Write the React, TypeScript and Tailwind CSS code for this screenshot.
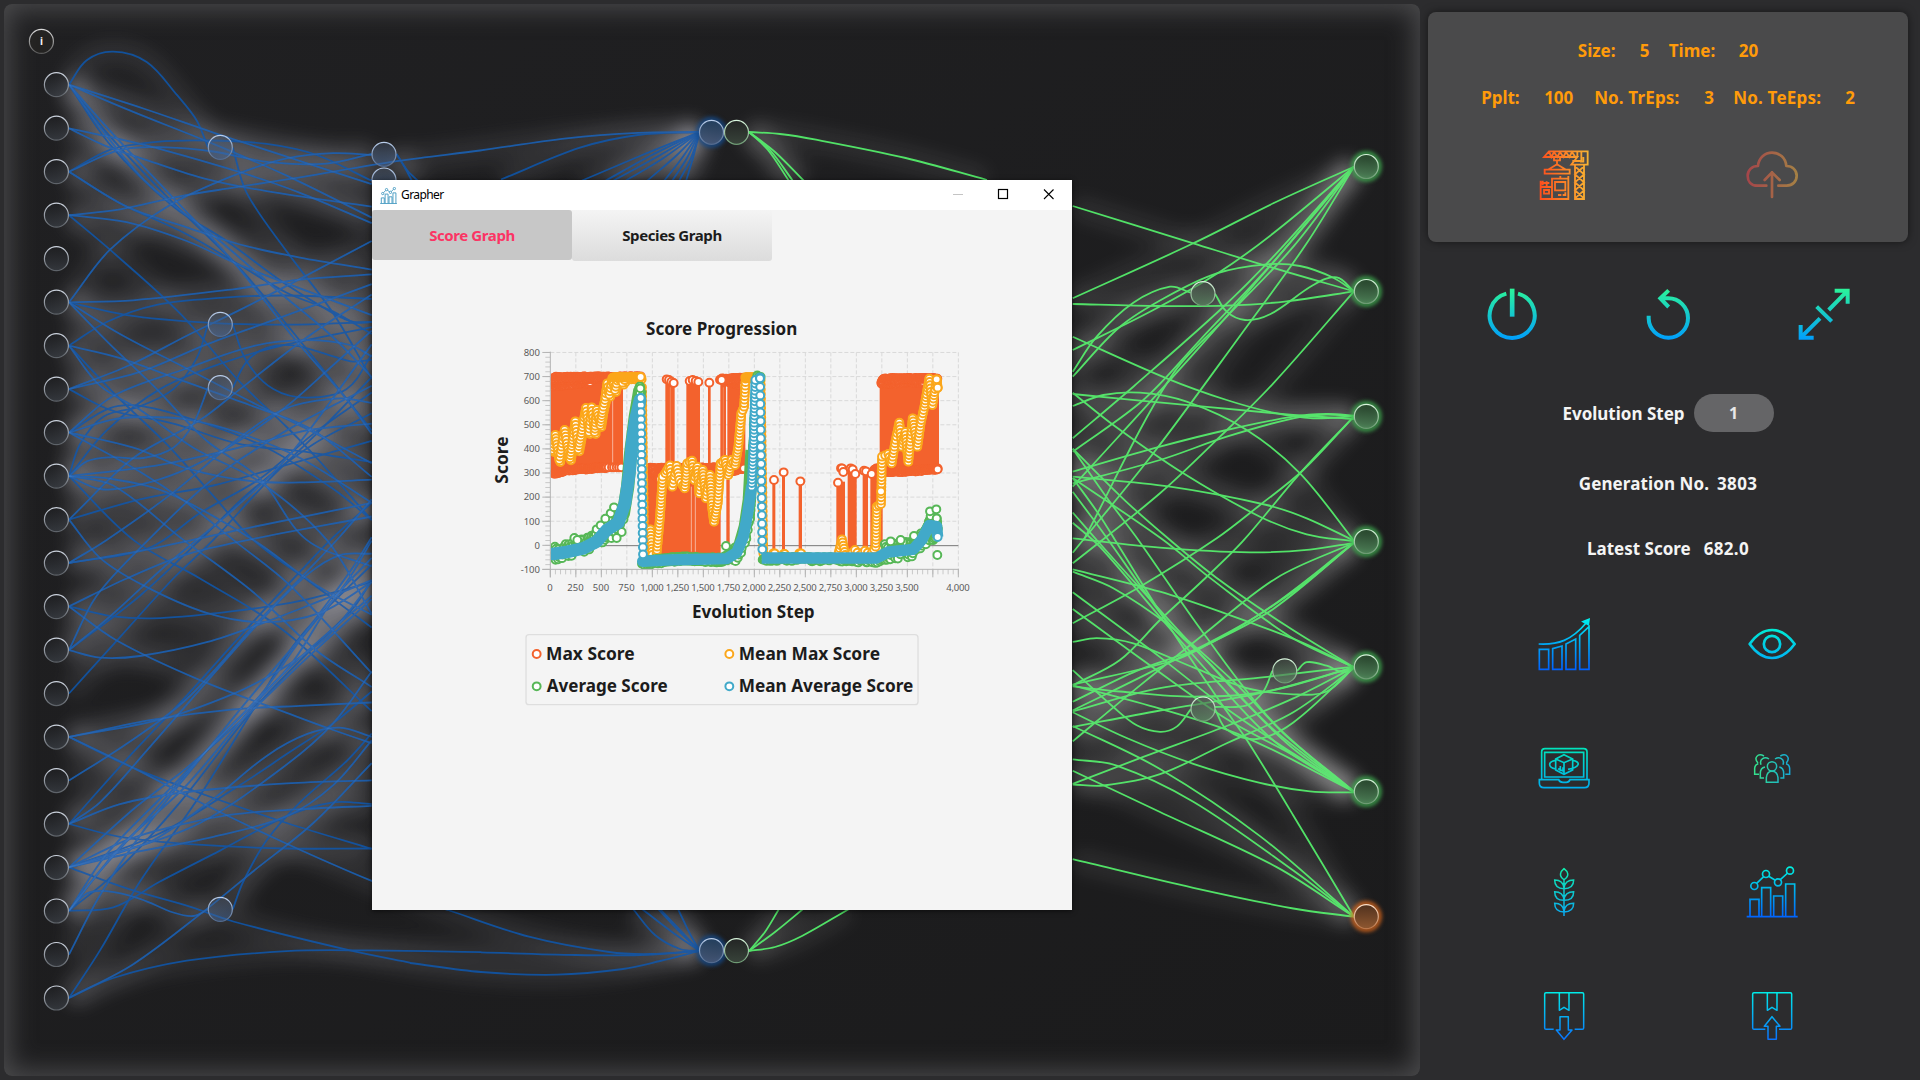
import React from "react";

type Pt = [number, number];
type Space = { ox: number; oy: number; sx: number; sy: number };

/* Smooth curve through a flat list of coordinates, mapped from a local space to canvas pixels. */
function curve(flat: number[], s: Space): string {
  const p: Pt[] = [];
  for (let i = 0; i < flat.length; i += 2) p.push([s.ox + flat[i] / s.sx, s.oy + flat[i + 1] / s.sy]);
  let d = `M${p[0][0].toFixed(1)} ${p[0][1].toFixed(1)}`;
  for (let i = 0; i < p.length - 1; i++) {
    const a = p[Math.max(0, i - 1)];
    const b = p[i];
    const c = p[i + 1];
    const e = p[Math.min(p.length - 1, i + 2)];
    const l = Math.hypot(c[0] - b[0], c[1] - b[1]);
    const l1 = Math.hypot(c[0] - a[0], c[1] - a[1]) || 1;
    const l2 = Math.hypot(e[0] - b[0], e[1] - b[1]) || 1;
    const k = l / 3;
    const x1 = b[0] + ((c[0] - a[0]) / l1) * k;
    const y1 = b[1] + ((c[1] - a[1]) / l1) * k;
    const x2 = c[0] - ((e[0] - b[0]) / l2) * k;
    const y2 = c[1] - ((e[1] - b[1]) / l2) * k;
    d += `C${x1.toFixed(1)} ${y1.toFixed(1)} ${x2.toFixed(1)} ${y2.toFixed(1)} ${c[0].toFixed(1)} ${c[1].toFixed(1)}`;
  }
  return d;
}

const LEFT: Space = { ox: 0, oy: 0, sx: 3, sy: 2.904 };
const MID: Space = { ox: 0, oy: 0, sx: 1, sy: 1 };
const RIGHT_TOP: Space = { ox: 1060, oy: 100, sx: 3, sy: 3 };
const RIGHT_BOTTOM: Space = { ox: 1060, oy: 540, sx: 3, sy: 2.904 };

const leftEdges: number[][] = [
  [207, 246, 260, 175, 340, 150, 440, 180, 530, 275, 590, 350, 624, 428],
  [207, 246, 430, 315, 640, 385, 860, 455, 1115, 535],
  [207, 246, 400, 325, 620, 410, 860, 510, 1115, 632],
  [207, 246, 330, 420, 520, 600, 680, 700, 850, 820, 1000, 910, 1060, 935, 1115, 935],
  [207, 246, 300, 370, 440, 530, 660, 700, 840, 850, 1000, 980, 1115, 1095],
  [207, 246, 340, 390, 520, 575, 700, 760, 880, 980, 1040, 1160, 1115, 1260],
  [207, 246, 320, 385, 500, 570, 720, 780, 850, 930, 1000, 1110, 1115, 1250],
  [207, 373, 340, 400, 470, 430, 720, 500, 900, 560, 1115, 648],
  [207, 373, 320, 425, 440, 465, 620, 520, 800, 555, 1115, 600],
  [207, 499, 330, 435, 470, 412, 620, 408, 800, 418, 950, 450, 1115, 525],
  [207, 499, 360, 435, 500, 428, 640, 440, 800, 470, 980, 475, 1115, 447],
  [207, 499, 380, 600, 560, 660, 720, 710, 900, 748, 1115, 783],
  [207, 499, 360, 590, 560, 680, 720, 770, 860, 850, 1000, 905, 1115, 970],
  [207, 625, 360, 608, 540, 570, 700, 545, 900, 515, 1190, 468, 1440, 437, 1700, 402, 1914, 386, 2098, 383],
  [207, 625, 380, 645, 560, 700, 720, 770, 880, 830, 1115, 915],
  [207, 625, 330, 725, 540, 910, 720, 1110, 860, 1240, 950, 1330, 1115, 1510],
  [207, 878, 330, 725, 510, 595, 700, 510, 860, 460, 1000, 445, 1115, 450],
  [207, 878, 400, 872, 700, 840, 900, 812, 1115, 797],
  [207, 878, 380, 915, 620, 937, 860, 943, 1115, 935],
  [207, 878, 360, 970, 560, 1070, 760, 1170, 940, 1255, 1115, 1345],
  [207, 878, 330, 1000, 460, 1120, 620, 1280, 780, 1390, 920, 1568, 1115, 1645],
  [207, 1004, 320, 935, 470, 885, 660, 865, 860, 858, 1115, 868],
  [207, 1004, 360, 1040, 560, 1110, 760, 1180, 940, 1250, 1115, 1385],
  [207, 1004, 300, 1120, 420, 1190, 580, 1300, 780, 1400, 980, 1568, 1115, 1782],
  [207, 1004, 350, 1150, 500, 1290, 640, 1440, 760, 1568, 930, 1690, 1115, 1822],
  [207, 1130, 390, 1060, 560, 975, 720, 900, 900, 810, 1115, 700],
  [207, 1130, 420, 1080, 620, 1000, 820, 930, 1115, 825],
  [207, 1130, 330, 1190, 520, 1230, 720, 1290, 900, 1310, 1115, 1342],
  [207, 1256, 340, 1150, 560, 1070, 760, 1005, 920, 988, 1050, 1002, 1115, 1035],
  [207, 1256, 330, 1220, 420, 1211, 560, 1218, 720, 1258, 900, 1330, 1115, 1460],
  [207, 1256, 330, 1185, 430, 1180, 600, 1225, 800, 1300, 1000, 1420, 1115, 1510],
  [207, 1256, 400, 1300, 560, 1360, 760, 1398, 940, 1400, 1115, 1393],
  [207, 1256, 420, 1370, 560, 1460, 700, 1568, 870, 1700, 1115, 1955],
  [207, 1383, 240, 1290, 310, 1210, 420, 1180, 520, 1130, 590, 1040, 624, 942],
  [207, 1383, 260, 1340, 330, 1328, 430, 1330, 520, 1300, 580, 1230, 624, 1126],
  [207, 1383, 300, 1420, 400, 1412, 540, 1370, 700, 1290, 860, 1180, 1000, 1060, 1115, 960],
  [207, 1383, 320, 1250, 480, 1130, 680, 1050, 860, 1000, 1115, 950],
  [207, 1383, 480, 1350, 760, 1290, 920, 1250, 1115, 1230],
  [207, 1383, 330, 1390, 500, 1430, 760, 1568, 950, 1700, 1115, 1785],
  [207, 1383, 400, 1568, 600, 1680, 850, 1830, 1115, 2065],
  [207, 1383, 340, 1410, 550, 1568, 760, 1720, 950, 1890, 1115, 1995],
  [207, 1509, 400, 1330, 600, 1220, 720, 1130, 920, 980, 1115, 855],
  [207, 1509, 420, 1450, 640, 1410, 860, 1350, 1115, 1280],
  [207, 1509, 300, 1620, 430, 1700, 620, 1780, 790, 1807, 960, 1780, 1115, 1690],
  [207, 1635, 320, 1568, 520, 1430, 720, 1270, 860, 1185, 1020, 1157, 1115, 1170],
  [207, 1635, 450, 1590, 600, 1490, 780, 1390, 940, 1260, 1115, 1140],
  [207, 1635, 420, 1600, 760, 1530, 1115, 1460],
  [207, 1761, 380, 1680, 560, 1610, 760, 1565, 1115, 1500],
  [207, 1761, 340, 1790, 480, 1795, 700, 1775, 900, 1745, 1115, 1690],
  [207, 1761, 350, 1860, 600, 1975, 860, 2070, 1000, 2120, 1115, 2158],
  [207, 1888, 290, 1730, 445, 1568, 640, 1390, 860, 1250, 1115, 1120],
  [207, 1888, 420, 1730, 600, 1568, 760, 1420, 940, 1290, 1115, 1200],
  [207, 1888, 330, 1790, 500, 1640, 700, 1480, 870, 1320, 1115, 1000],
  [207, 1888, 300, 1910, 420, 1905, 620, 1865, 800, 1805, 960, 1745, 1115, 1685],
  [207, 2014, 360, 1850, 520, 1680, 640, 1568, 800, 1400, 960, 1250, 1115, 1095],
  [207, 2140, 460, 2090, 700, 2060, 900, 2050, 1115, 2040],
  [207, 2140, 480, 2090, 700, 2015, 840, 1945, 980, 1850, 1115, 1690],
  [207, 2140, 400, 2230, 620, 2310, 860, 2390, 1115, 2465],
  [207, 2140, 400, 2230, 600, 2330, 860, 2450, 1115, 2558, 1344, 2643],
  [207, 2267, 380, 2160, 560, 2030, 760, 1820, 920, 1660, 1020, 1558, 1115, 1450],
  [207, 2393, 380, 2205, 560, 2020, 760, 1805, 900, 1660, 1000, 1560, 1115, 1460],
  [207, 2393, 300, 2330, 440, 2180, 620, 1980, 780, 1805, 920, 1670, 1020, 1612, 1115, 1608],
  [207, 2393, 360, 2335, 560, 2300, 860, 2275, 1115, 2266],
  [207, 2393, 360, 2430, 580, 2452, 860, 2464, 1115, 2464],
  [207, 2519, 380, 2440, 520, 2400, 700, 2365, 900, 2350, 1115, 2340],
  [207, 2519, 330, 2480, 460, 2440, 640, 2320, 800, 2195, 920, 2132, 1020, 2113, 1115, 2140],
  [207, 2519, 480, 2420, 720, 2280, 860, 2190, 1000, 2100, 1115, 2008],
  [207, 2519, 360, 2475, 600, 2390, 860, 2220, 1000, 2100, 1115, 1950],
  [207, 2519, 380, 2480, 640, 2430, 860, 2370, 1000, 2280, 1115, 2150],
  [207, 2519, 380, 2580, 560, 2630, 700, 2676, 1050, 2760, 1232, 2796],
  [207, 2519, 400, 2350, 560, 2230, 760, 2060, 900, 1930, 1115, 1740],
  [207, 2645, 260, 2595, 320, 2588, 420, 2610, 520, 2650, 580, 2660, 624, 2641],
  [207, 2645, 340, 2635, 480, 2560, 660, 2470, 860, 2370, 1000, 2330, 1115, 2335],
  [207, 2645, 360, 2460, 560, 2280, 760, 2050, 880, 1920, 1000, 1740, 1115, 1620],
  [207, 2645, 320, 2480, 500, 2300, 640, 2160, 900, 1910, 1115, 1730],
  [207, 2645, 340, 2540, 540, 2330, 760, 2060, 940, 1880, 1060, 1765, 1115, 1685],
  [207, 2645, 300, 2530, 440, 2380, 620, 2180, 780, 2020, 900, 1860, 1040, 1690, 1115, 1570],
  [207, 2772, 300, 2600, 440, 2400, 620, 2180, 780, 1990, 920, 1830, 1050, 1660, 1115, 1560],
  [207, 2898, 300, 2760, 420, 2560, 600, 2310, 760, 2060, 900, 1850, 1115, 1640],
  [207, 2898, 400, 2800, 620, 2640, 760, 2530, 940, 2390, 1115, 2216],
  [207, 2898, 340, 2840, 560, 2790, 860, 2762, 1100, 2760, 1444, 2765],
  [698, 428, 740, 560, 860, 730, 1000, 910, 1115, 1100],
  [698, 942, 740, 1050, 820, 1130, 920, 1155, 1040, 1130, 1115, 1030],
  [698, 1126, 740, 1050, 800, 1010, 880, 1003, 1000, 1035, 1060, 1050, 1115, 1045],
  [698, 2641, 730, 2560, 800, 2440, 900, 2330, 1040, 2210, 1115, 2130],
];

const midBlueEdges: number[][] = [
  [501, 179.5, 580, 147.7, 638, 135, 699.5, 132],
  [581, 181, 640, 156, 699.5, 132],
  [605, 181, 650, 156, 699.5, 132],
  [613, 181, 655, 158, 699.5, 132],
  [625, 181, 662, 159, 699.5, 132],
  [647, 181, 677, 155, 699.5, 132],
  [664, 181, 682, 158, 699.5, 132],
  [672, 181, 687, 158, 699.5, 132],
  [679, 181, 691, 158, 699.5, 132],
  [686, 181, 693, 158, 699.5, 132],
  [396.5, 154, 404, 166, 412, 181],
  [396.5, 154, 407, 170, 418, 181],
  [448, 910, 529, 936.7, 609, 952, 650, 954, 699.5, 951],
  [481, 952.3, 576, 955, 640, 955, 699.5, 951],
  [410, 963, 481, 972, 557, 974.7, 623, 969, 660, 961, 699.5, 951],
  [633, 909, 655, 935, 680, 949, 699.5, 951],
  [642, 909, 672, 932, 699.5, 951],
  [658, 909, 678, 930, 699.5, 951],
  [660, 909, 682, 932, 699.5, 951],
  [678, 909, 689, 932, 699.5, 951],
];

const midGreenEdges: number[][] = [
  [749, 132, 780, 134, 816, 139.7, 905.7, 158, 987, 180],
  [749, 132, 768, 150, 789, 181],
  [749, 132, 770, 150, 793, 181],
  [749, 132, 775, 152, 804, 181],
  [749, 951, 765, 932, 779, 909],
  [749, 951, 775, 932, 803, 909],
  [749, 951, 775, 947, 802, 936, 849, 909],
];

const rightTopEdges: number[][] = [
  [38, 595, 400, 430, 640, 310, 882, 200],
  [38, 318, 400, 430, 620, 498, 882, 574],
  [38, 612, 300, 618, 500, 617, 680, 604, 882, 574],
  [38, 750, 280, 630, 480, 515, 640, 400, 882, 200],
  [38, 815, 110, 710, 220, 608, 330, 560, 392, 578],
  [465, 581, 500, 635, 555, 660, 630, 643, 760, 555, 830, 532, 882, 574],
  [38, 830, 180, 680, 320, 590, 470, 520, 620, 493, 720, 498, 820, 533, 882, 574],
  [38, 1015, 220, 860, 480, 630, 640, 470, 882, 200],
  [38, 1055, 250, 900, 420, 720, 650, 475, 882, 200],
  [38, 1160, 180, 1005, 420, 740, 620, 510, 882, 200],
  [70, 1322, 330, 835, 500, 650, 700, 440, 882, 200],
  [38, 1358, 280, 1060, 560, 680, 740, 430, 882, 200],
  [38, 710, 320, 835, 500, 900, 640, 938, 760, 955, 882, 949],
  [38, 882, 400, 917, 700, 945, 882, 957],
  [38, 1115, 300, 1040, 500, 990, 700, 950, 800, 942, 882, 947],
  [38, 1150, 300, 1080, 500, 1010, 700, 955, 800, 944, 882, 949],
  [38, 918, 130, 885, 240, 878, 380, 905, 560, 990, 720, 1120, 882, 1322],
  [38, 878, 160, 975, 370, 1120, 600, 1250, 740, 1303, 882, 1324],
  [38, 1130, 330, 1160, 620, 1215, 740, 1255, 882, 1322],
  [882, 574, 640, 850, 480, 1010, 300, 1180, 38, 1390],
  [882, 949, 730, 1110, 600, 1215, 470, 1315, 240, 1460, 38, 1570],
  [882, 949, 720, 1120, 550, 1322, 430, 1440, 300, 1560, 180, 1680, 38, 1756],
];

const rightBottomEdges: number[][] = [
  [38, -265, 150, -110, 235, 0, 430, 270, 640, 530, 882, 731],
  [38, -140, 100, -60, 145, 0, 320, 235, 440, 350, 640, 550, 882, 731],
  [38, -80, 110, 0, 240, 140, 410, 320, 680, 590, 882, 731],
  [38, -50, 120, 20, 310, 235, 460, 400, 650, 590, 882, 731],
  [38, -180, 120, -70, 165, 0, 320, 240, 480, 470, 560, 580, 700, 800, 882, 1094],
  [38, -265, 200, -110, 330, 0, 470, 110, 680, 250, 882, 370],
  [38, -180, 310, 0, 450, 110, 690, 280, 882, 370],
  [38, -5, 300, 22, 570, 36, 750, 28, 882, 8],
  [38, 85, 300, 150, 500, 215, 720, 295, 882, 370],
  [38, 92, 160, 140, 330, 250, 520, 410, 680, 570, 882, 731],
  [38, 152, 300, 340, 500, 490, 700, 620, 882, 731],
  [38, 200, 250, 350, 500, 520, 700, 625, 882, 731],
  [38, 296, 110, 285, 220, 300, 400, 370, 560, 430, 700, 448, 800, 440, 882, 370],
  [38, 378, 160, 485, 230, 538, 300, 557, 350, 542, 392, 492],
  [465, 491, 500, 550, 590, 578, 700, 530, 882, 370],
  [465, 485, 560, 480, 610, 440, 637, 380],
  [711, 380, 740, 355, 800, 365, 850, 384, 882, 370],
  [38, 470, 230, 380, 450, 300, 700, 150, 882, 8],
  [38, 495, 300, 370, 600, 215, 882, 8],
  [38, 585, 230, 430, 430, 275, 650, 110, 882, 8],
  [38, 425, 180, 440, 400, 455, 620, 440, 882, 370],
  [38, 498, 300, 430, 600, 400, 882, 368],
  [38, 543, 300, 495, 600, 445, 882, 370],
  [38, 708, 250, 630, 500, 540, 700, 460, 882, 370],
  [38, 710, 130, 713, 300, 680, 500, 590, 700, 500, 882, 372],
  [38, 420, 340, 350, 450, 300, 640, 200, 882, 8],
  [38, 500, 200, 575, 400, 650, 600, 705, 750, 730, 882, 733],
  [38, 422, 300, 490, 550, 570, 882, 731],
  [38, 637, 170, 655, 400, 760, 700, 960, 882, 1094],
  [38, 540, 300, 665, 600, 860, 882, 1094],
  [38, 670, 300, 790, 650, 950, 882, 1094],
  [38, 927, 400, 1010, 700, 1070, 882, 1094],
];

const bluePaths = [...leftEdges.map((e) => curve(e, LEFT)), ...midBlueEdges.map((e) => curve(e, MID))];
const greenPaths = [
  ...midGreenEdges.map((e) => curve(e, MID)),
  ...rightTopEdges.map((e) => curve(e, RIGHT_TOP)),
  ...rightBottomEdges.map((e) => curve(e, RIGHT_BOTTOM)),
];

const inputNodes: Pt[] = Array.from({ length: 22 }, (_, i) => [56.4, 84.7 + 43.49 * i]);
const blueHidden: Pt[] = [
  [220.3, 147.4],
  [220.3, 324.4],
  [220.3, 387.7],
  [220.3, 909.4],
  [384, 180],
  [384, 154.3],
];
const greenHidden: Pt[] = [
  [1203, 293.7],
  [1203, 709],
  [1284.7, 670.9],
];
const outputNodes: Pt[] = [
  [1366.3, 166.5],
  [1366.3, 291.5],
  [1366.3, 416.4],
  [1366.3, 541.5],
  [1366.3, 666.8],
  [1366.3, 791.6],
];

function Node({ at, fill, ring, glow }: { at: Pt; fill: string; ring: string; glow?: string }) {
  return (
    <g>
      {glow && <circle cx={at[0]} cy={at[1]} r="13" fill="none" stroke={glow} strokeWidth="4" filter="url(#nodeGlow)" />}
      <circle cx={at[0]} cy={at[1]} r="12" fill={fill} stroke={ring} strokeWidth="1.2" />
    </g>
  );
}

function Stops({ id, stops }: { id: string; stops: [string, number][] }) {
  return (
    <linearGradient id={id} x1="0" y1="0" x2="0" y2="1">
      {stops.map(([c, o], i) => (
        <stop key={i} offset={i / (stops.length - 1)} stopColor={c} stopOpacity={o} />
      ))}
    </linearGradient>
  );
}

function Network() {
  const all = [...bluePaths, ...greenPaths];
  return (
    <svg className="block h-full w-full" viewBox="4 4 1416 1072">
      <defs>
        <filter id="haze" filterUnits="userSpaceOnUse" x="0" y="0" width="1420" height="1080" colorInterpolationFilters="sRGB">
          <feGaussianBlur stdDeviation="9.5" />
        </filter>
        <filter id="nodeGlow" x="-50%" y="-50%" width="200%" height="200%" colorInterpolationFilters="sRGB">
          <feGaussianBlur stdDeviation="2.2" />
        </filter>
        <Stops id="ringBlue" stops={[["#ccd3de", 1], ["#5d6268", 1]]} />
        <Stops id="fillIn" stops={[["#1e1f22", 0.55], ["#3c4148", 0.7]]} />
        <Stops id="ringHid" stops={[["#b9cdea", 1], ["#51698d", 1]]} />
        <Stops id="fillHid" stops={[["#4a5d78", 0.3], ["#456ba2", 0.5]]} />
        <Stops id="fillHidDark" stops={[["#23405f", 0.9], ["#47597a", 0.9]]} />
        <Stops id="ringGreen" stops={[["#d8f5dc", 1], ["#6d9a73", 1]]} />
        <Stops id="fillGreen" stops={[["#27452c", 0.9], ["#50865a", 0.9]]} />
        <Stops id="fillGreenHid" stops={[["#4c594e", 0.5], ["#5d8a64", 0.75]]} />
        <Stops id="fillGreyGreen" stops={[["#232524", 1], ["#38433a", 1]]} />
        <Stops id="ringOrange" stops={[["#ffe0c8", 1], ["#b9764a", 1]]} />
        <Stops id="fillOrange" stops={[["#50311e", 1], ["#8e5730", 1]]} />
        <Stops id="ringGrey" stops={[["#e0e0e0", 1], ["#5a5a5a", 1]]} />
      </defs>
      <g fill="none" stroke="#ffffff" strokeWidth="24" strokeOpacity="0.064" filter="url(#haze)">
        {all.map((d, i) => (
          <path key={i} d={d} />
        ))}
      </g>
      <g fill="none" stroke="#0f4f9a" strokeWidth="1.8">
        {bluePaths.map((d, i) => (
          <path key={i} d={d} />
        ))}
      </g>
      <g fill="none" stroke="#c4dcff" strokeWidth="20" strokeOpacity="0.022" filter="url(#haze)">
        {bluePaths.map((d, i) => (
          <path key={i} d={d} />
        ))}
      </g>
      <g fill="none" stroke="#4fe265" strokeWidth="1.8">
        {greenPaths.map((d, i) => (
          <path key={i} d={d} />
        ))}
      </g>
      <g fill="none" stroke="#ffffff" strokeWidth="20" strokeOpacity="0.018" filter="url(#haze)">
        {greenPaths.map((d, i) => (
          <path key={i} d={d} />
        ))}
      </g>
      <g fill="none" stroke="#6ba2ec" strokeWidth="1.8" strokeOpacity="0.12">
        {bluePaths.slice(0, 80).map((d, i) => (i % 3 ? <path key={i} d={d} /> : null))}
      </g>
      {inputNodes.map((p, i) => (
        <Node key={i} at={p} fill="url(#fillIn)" ring="url(#ringBlue)" />
      ))}
      {blueHidden.map((p, i) => (
        <Node key={i} at={p} fill="url(#fillHid)" ring="url(#ringHid)" />
      ))}
      {greenHidden.map((p, i) => (
        <Node key={i} at={p} fill="url(#fillGreenHid)" ring="url(#ringGreen)" />
      ))}
      <Node at={[711.5, 132.3]} fill="url(#fillHidDark)" ring="url(#ringHid)" glow="#134a8c" />
      <Node at={[736.5, 132.3]} fill="url(#fillGreyGreen)" ring="url(#ringGreen)" />
      <Node at={[711.5, 950.6]} fill="url(#fillHidDark)" ring="url(#ringHid)" glow="#134a8c" />
      <Node at={[736.5, 950.6]} fill="url(#fillGreyGreen)" ring="url(#ringGreen)" />
      {outputNodes.map((p, i) => (
        <Node key={i} at={p} fill="url(#fillGreen)" ring="url(#ringGreen)" glow="#3fae50" />
      ))}
      <Node at={[1366.3, 916.6]} fill="url(#fillOrange)" ring="url(#ringOrange)" glow="#e06a1c" />
      <circle cx="41.4" cy="41.4" r="12" fill="#242322" stroke="url(#ringGrey)" strokeWidth="1.2" />
      <text x="41.4" y="45" textAnchor="middle" fill="#f2f2f2" fontSize="10" fontWeight="700" fontFamily="Noto Sans, sans-serif">
        i
      </text>
    </svg>
  );
}

/* ---------- Chart ---------- */

const RED = "#f3622d";
const ORANGE = "#fba71b";
const GREEN = "#57b757";
const CYAN = "#41a9c9";

function along(flat: number[], step: number): Pt[] {
  const out: Pt[] = [];
  for (let i = 0; i + 3 < flat.length; i += 2) {
    const [x1, y1, x2, y2] = [flat[i], flat[i + 1], flat[i + 2], flat[i + 3]];
    const n = Math.max(1, Math.round(Math.hypot(x2 - x1, y2 - y1) / step));
    for (let k = 0; k < n; k++) out.push([x1 + ((x2 - x1) * k) / n, y1 + ((y2 - y1) * k) / n]);
  }
  out.push([flat[flat.length - 2], flat[flat.length - 1]]);
  return out;
}

const noise = (n: number) => {
  const v = Math.sin(n * 127.1 + 11.7) * 43758.5453;
  return (v - Math.floor(v)) * 2 - 1;
};

function jitter(pts: Pt[], amp: number): Pt[] {
  return pts.map(([x, y], i) => [x, y + noise(i) * amp]);
}

function shift(flat: number[], dx: number, dy: number): number[] {
  return flat.map((v, i) => v + (i % 2 ? dy : dx));
}

function Dots({ pts, color }: { pts: Pt[]; color: string }) {
  return (
    <g fill="#ffffff" stroke={color} strokeWidth="6">
      {pts.map(([x, y], i) => (
        <circle key={i} cx={x.toFixed(1)} cy={y.toFixed(1)} r="11.8" />
      ))}
    </g>
  );
}

const redBlocks: [number, number, number, number][] = [
  [211, 230, 429, 515],
  [556, 240, 584, 520],
  [619, 240, 660, 520],
  [684, 246, 692, 520],
  [721, 240, 738, 520],
  [742, 230, 796, 510],
  [503, 500, 536, 760],
  [540, 500, 722, 770],
  [739, 540, 749, 760],
  [877, 540, 886, 760],
  [906, 516, 915, 760],
  [956, 545, 966, 760],
  [1069, 545, 1095, 760],
  [1103, 510, 1130, 760],
  [1148, 515, 1164, 760],
  [1171, 510, 1208, 740],
  [1199, 240, 1377, 515],
];
const redRows: number[][] = [
  [222, 256, 330, 248],
  [224, 238, 470, 234],
  [222, 232, 482, 231],
  [222, 520, 260, 510, 380, 502],
  [505, 505, 722, 504],
  [515, 510, 540, 540],
  [742, 515, 792, 504],
  [745, 245, 790, 256],
  [720, 238, 800, 234],
  [1205, 250, 1330, 245],
  [1204, 247, 1212, 236, 1372, 236],
  [1210, 514, 1280, 514, 1373, 507],
  [1183, 508, 1205, 505],
];
const redSingles: Pt[] = [
  [386, 502], [396, 502], [402, 502], [410, 502], [417, 502], [424, 502], [560, 238], [567, 240], [574, 245], [581, 249], [629, 243], [638, 240], [647, 243], [655, 246],
  [688, 248], [725, 240], [792, 505], [882, 540], [911, 517], [961, 544], [1074, 548], [1083, 505], [1086, 505], [1090, 516],
  [1112, 505], [1118, 508], [1126, 522], [1152, 512], [1158, 514], [1175, 522], [1373, 508],
];
const orangeMain = [
  219, 450, 226, 405, 238, 480, 248, 420, 254, 390, 262, 440, 270, 475, 278, 420, 286, 364, 295, 448, 304, 400, 318, 324, 327, 396, 335, 322, 344, 396,
  350, 330, 361, 375, 368, 330, 375, 300, 382, 250, 388, 284, 397, 234, 405, 270, 414, 232, 428, 248, 440, 232, 482, 232,
];
const orangeSecond = [
  505, 760, 511, 688, 517, 765, 530, 760, 540, 650, 548, 530, 556, 520, 570, 496, 577, 560, 590, 498, 598, 540, 614, 565, 622, 490, 636, 482,
  643, 540, 652, 500, 658, 580, 668, 510, 678, 595, 690, 525, 696, 620, 702, 665, 713, 610, 722, 490, 735, 480, 745, 525, 755, 480, 765, 495,
  775, 440, 784, 340, 792, 320, 797, 236, 835, 232,
];
const orangeThird = [
  1075, 762, 1086, 718, 1096, 765, 1110, 765, 1125, 750, 1140, 766, 1155, 752, 1172, 764, 1187, 740, 1190, 620, 1203, 612, 1206, 470, 1225, 462,
  1235, 490, 1245, 430, 1258, 368, 1266, 440, 1276, 396, 1285, 485, 1298, 355, 1312, 440, 1322, 370, 1333, 320, 1348, 236, 1357, 315,
  1370, 238, 1373, 263,
];
const greenRise = [219, 760, 290, 742, 350, 720, 400, 690, 430, 640, 443, 560, 452, 460, 466, 350, 480, 268];
const greenFlat = [486, 788, 600, 776, 730, 780, 780, 750, 800, 680, 812, 600, 820, 450, 826, 300, 832, 232, 842, 232];
const greenLast = [848, 776, 960, 776, 1195, 782, 1230, 752, 1300, 745, 1335, 700, 1350, 660, 1370, 660, 1373, 690];
const greenSingles: Pt[] = [
  [283, 714], [292, 720], [392, 640], [402, 622], [425, 696], [410, 714], [481, 265], [738, 738], [350, 688], [362, 676], [376, 656],
  [1352, 648], [1370, 655], [1350, 634], [1369, 628], [1372, 765], [1302, 708], [1232, 724], [1262, 720],
];
const cyanRise = [219, 762, 260, 756, 310, 745, 350, 725, 380, 690, 415, 668, 435, 610, 448, 520, 456, 430, 466, 360, 480, 300];
const cyanFall = [482, 294, 489, 763];
const cyanFlat = [488, 784, 560, 780, 740, 776, 770, 758, 790, 710, 803, 640, 815, 560];
const cyanTop = [815, 560, 822, 400, 826, 240, 840, 232];
const cyanFall2 = [840, 235, 847, 748];
const cyanLast = [845, 774, 1190, 774, 1225, 756, 1300, 748, 1325, 720, 1348, 676, 1370, 680, 1373, 711];

function ScoreChart() {
  const yTicks = [800, 700, 600, 500, 400, 300, 200, 100, 0, -100];
  const xLabels = [0, 250, 500, 750, 1000, 1250, 1500, 1750, 2000, 2250, 2500, 2750, 3000, 3250, 3500, 4000];
  const toX = (v: number) => 211 + v * 0.306;
  const toY = (v: number) => 736 - v * 0.7233;
  return (
    <svg className="block h-[420px] w-[520px]" viewBox="0 0 1560 1260" fontFamily="Noto Sans, Open Sans, sans-serif">
      <defs>
        <clipPath id="plot">
          <rect x="212" y="150" width="1224" height="657" />
        </clipPath>
      </defs>
      <g stroke="#d9d9d9" strokeWidth="3" strokeDasharray="12 6">
        {yTicks.filter((v) => v !== 0 && v !== -100).map((v) => (
          <line key={v} x1="211" x2="1435" y1={toY(v)} y2={toY(v)} />
        ))}
        {Array.from({ length: 16 }, (_, i) => (
          <line key={i} y1="157" y2="808" x1={toX(250 * (i + 1))} x2={toX(250 * (i + 1))} />
        ))}
      </g>
      <line x1="211" x2="1435" y1="737" y2="737" stroke="#777777" strokeWidth="3" />
      <g stroke="#c8c8c8" strokeWidth="3">
        {Array.from({ length: 81 }, (_, i) => (
          <line key={i} x1={toX(50 * i)} x2={toX(50 * i)} y1="808" y2="823" />
        ))}
        {Array.from({ length: 46 }, (_, i) => (
          <line key={i} x1="196" x2="211" y1={toY(-100 + 20 * i)} y2={toY(-100 + 20 * i)} />
        ))}
      </g>

      <g clipPath="url(#plot)">
        <g fill={RED}>
          {redBlocks.map(([x1, y1, x2, y2], i) => (
            <rect key={i} x={x1} y={y1} width={x2 - x1} height={y2 - y1} />
          ))}
        </g>
        <g stroke="#f9c3ae" strokeWidth="2.5">
          <line x1="398" x2="398" y1="290" y2="495" />
          <line x1="571" x2="571" y1="262" y2="490" stroke="#f58a60" />
          <line x1="634" x2="634" y1="560" y2="755" />
          <line x1="646" x2="646" y1="560" y2="755" />
          <line x1="730" x2="730" y1="262" y2="480" stroke="#f58a60" />
        </g>
        <Dots pts={[[218, 260], [238, 256], [258, 255]]} color={RED} />
        {redRows.map((r, i) => (
          <Dots key={i} pts={jitter(along(r, 2), 2.5)} color={RED} />
        ))}
        <Dots pts={redSingles} color={RED} />

        <g fill="none" stroke={ORANGE} strokeWidth="28" strokeLinejoin="round" strokeLinecap="round">
          <polyline points={orangeMain.join(" ")} />
          <polyline points={orangeSecond.join(" ")} />
          <polyline points={orangeThird.slice(24).join(" ")} />
        </g>
        <Dots pts={along(shift(orangeMain, 3, 6), 10)} color={ORANGE} />
        <Dots pts={along(orangeMain, 10)} color={ORANGE} />
        <Dots pts={along([400, 232, 482, 232], 2)} color={ORANGE} />
        <Dots pts={along([486, 262, 493, 760], 14)} color={ORANGE} />
        <Dots pts={along(orangeSecond, 10)} color={ORANGE} />
        <Dots pts={along([796, 232, 836, 232], 2)} color={ORANGE} />
        <Dots pts={along([842, 240, 850, 760], 14)} color={ORANGE} />
        <Dots pts={[[880, 760], [884, 760], [911, 762], [914, 762], [958, 760], [963, 760]]} color={ORANGE} />
        <Dots pts={along(orangeThird, 10)} color={ORANGE} />
        <Dots pts={[[1203, 574], [1370, 238], [1373, 263]]} color={ORANGE} />

        <g fill="none" stroke={GREEN} strokeWidth="40" strokeLinejoin="round">
          <polyline points={greenRise.join(" ")} />
          <polyline points={shift(greenFlat, -4, 0).slice(0, 14).join(" ")} />
        </g>
        <Dots pts={jitter(along(greenRise, 2), 22)} color={GREEN} />
        <Dots pts={jitter(along(greenFlat, 2), 8)} color={GREEN} />
        <Dots pts={jitter(along([760, 770, 790, 725, 808, 660, 815, 560, 822, 420], 3), 24)} color={GREEN} />
        <Dots pts={jitter(along(greenLast, 3), 7)} color={GREEN} />
        <Dots pts={jitter(along([1210, 755, 1300, 745, 1345, 700, 1372, 690], 1.5), 26)} color={GREEN} />
        <Dots pts={greenSingles} color={GREEN} />

        <g fill="none" stroke={CYAN} strokeWidth="34" strokeLinejoin="round">
          <polyline points={cyanRise.join(" ")} strokeLinecap="round" strokeWidth="38" />
          <polyline points={cyanFlat.join(" ")} strokeLinecap="round" />
          <polyline points={cyanLast.join(" ")} />
        </g>
        <Dots pts={along(cyanFall, 21.5)} color={CYAN} />
        <Dots pts={along(cyanTop, 11)} color={CYAN} />
        <Dots pts={along(cyanFall2, 26)} color={CYAN} />
        <Dots pts={[[482, 294], [840, 235], [1373, 711]]} color={CYAN} />
        <Dots pts={[[482, 231]]} color={ORANGE} />
      </g>

      <g stroke="#b4b4b4" strokeWidth="3">
        <line x1="211" x2="211" y1="155" y2="832" />
        <line x1="187" x2="1437" y1="808" y2="808" />
        {yTicks.map((v) => (
          <line key={v} x1="187" x2="211" y1={toY(v)} y2={toY(v)} />
        ))}
        {Array.from({ length: 17 }, (_, i) => (
          <line key={i} x1={toX(250 * i)} x2={toX(250 * i)} y1="808" y2="832" />
        ))}
      </g>
      <g fontSize="28.5" fill="#5a5a5a">
        {yTicks.map((v) => (
          <text key={v} x="180" y={toY(v) + 10} textAnchor="end">
            {v}
          </text>
        ))}
        {xLabels.map((v) => (
          <text key={v} x={toX(v) - 1} y="873" textAnchor="middle" textLength={v >= 1000 ? 70 : undefined}>
            {v.toLocaleString("en-US")}
          </text>
        ))}
      </g>
      <g fontWeight="700" fill="#1c1c1c" fontSize="52">
        <text x="498" y="105" textLength="454" lengthAdjust="spacingAndGlyphs">Score Progression</text>
        <text x="636" y="955" textLength="368" lengthAdjust="spacingAndGlyphs">Evolution Step</text>
        <text transform="translate(85 551) rotate(-90)" textLength="142" lengthAdjust="spacingAndGlyphs">Score</text>
      </g>
      <rect x="138" y="1004" width="1176" height="210" rx="9" fill="#f4f4f4" stroke="#dedede" strokeWidth="4" />
      <Dots pts={[[170, 1062]]} color={RED} />
      <Dots pts={[[748, 1062]]} color={ORANGE} />
      <Dots pts={[[170, 1159]]} color={GREEN} />
      <Dots pts={[[748, 1159]]} color={CYAN} />
      <g fontWeight="700" fill="#1c1c1c" fontSize="52">
        <text x="198" y="1080" textLength="266" lengthAdjust="spacingAndGlyphs">Max Score</text>
        <text x="776" y="1080" textLength="424" lengthAdjust="spacingAndGlyphs">Mean Max Score</text>
        <text x="200" y="1177" textLength="363" lengthAdjust="spacingAndGlyphs">Average Score</text>
        <text x="776" y="1177" textLength="524" lengthAdjust="spacingAndGlyphs">Mean Average Score</text>
      </g>
    </svg>
  );
}

function GrapherWindow() {
  return (
    <div className="absolute left-[368px] top-[176px] flex h-[730px] w-[700px] flex-col bg-[#f4f4f4] shadow-[0_1px_5px_rgba(0,0,0,0.6)]">
      <div className="flex h-[30px] items-center bg-white pl-2">
        <svg className="h-[17px] w-[17px]" viewBox="739 77 156 156">
          <BarsShape stroke="#4f9fc4" width={9} />
        </svg>
        <span className="ml-1 text-[12px] leading-none tracking-[-0.6px] text-black">Grapher</span>
        <div className="ml-auto flex items-center">
          <svg className="h-[30px] w-[138px]" viewBox="0 0 138 30" fill="none" strokeWidth="1">
            <path d="M19 14.5h10" stroke="#c4c4c4" />
            <rect x="64.5" y="9.5" width="9" height="9" stroke="#000000" strokeWidth="1.2" />
            <path d="M110 9.500l9.500 9.500M119.500 9.500l-9.500 9.500" stroke="#000000" strokeWidth="1.1" />
          </svg>
        </div>
      </div>
      <div className="flex text-[15px] font-bold tracking-[-0.4px]">
        <div className="flex h-[50px] w-[200px] items-center justify-center rounded-[3px] bg-[#c7c7c7] text-[#fb3464]">Score Graph</div>
        <div className="flex h-[51px] w-[200px] items-center justify-center rounded-b-[3px] bg-gradient-to-b from-[#f4f4f4] to-[#dcdcdc] text-[#1c1c1c]">
          Species Graph
        </div>
      </div>
      <div className="ml-[108px] mt-[39px]">
        <ScoreChart />
      </div>
    </div>
  );
}

/* ---------- Side bar icons ---------- */

function Icon({ box, id, from, to, dir = "v", width = 5, opacity = 1, children }: {
  box: [number, number]; id: string; from: string; to: string; dir?: "v" | "h"; width?: number; opacity?: number; children: React.ReactNode;
}) {
  const [x, y] = box;
  return (
    <svg className="h-[52px] w-[52px] overflow-visible" viewBox={`${x} ${y} 156 156`} fill="none" stroke={`url(#${id})`} strokeWidth={width} opacity={opacity}>
      <defs>
        <linearGradient id={id} gradientUnits="userSpaceOnUse" x1={x} y1={y} x2={dir === "h" ? x + 156 : x} y2={dir === "v" ? y + 156 : y}>
          <stop offset="0" stopColor={from} />
          <stop offset="1" stopColor={to} />
        </linearGradient>
      </defs>
      {children}
    </svg>
  );
}

function BarsShape({ stroke, width }: { stroke?: string; width?: number }) {
  return (
    <g fill="none" stroke={stroke} strokeWidth={width}>
      <path d="M741 229H894M751 229V177H778V229M786 229V142H813V229M822 229V167H849V229M858 229V131H885V229" />
      <circle cx="764" cy="137" r="10.500" />
      <circle cx="799" cy="101" r="10.500" />
      <circle cx="835" cy="126" r="10.500" />
      <circle cx="871" cy="91" r="10.500" />
      <path d="M771 129L792 109M807 108L827 120M842 118L864 98" />
    </g>
  );
}

const leafPair = (y: number) =>
  `M193 ${y + 24}C191 ${y + 8} 182 ${y} 165 ${y}C165 ${y + 16} 174 ${y + 26} 193 ${y + 26}C212 ${y + 26} 222 ${y + 16} 222 ${y}C205 ${y} 195 ${y + 8} 193 ${y + 24}`;

function Sidebar() {
  return (
    <aside className="ml-2 flex w-[480px] flex-col items-center">
      <section className="mt-2 flex h-[230px] w-full shrink-0 flex-col items-center rounded-lg bg-[#4a4a4b] text-[17px] font-bold leading-[24px] text-[#ff9b0a] shadow-[0_0_8px_rgba(0,0,0,0.5)]">
        <div className="mt-[27px] flex justify-center">
          <span className="w-[62px]">Size:</span>
          <span className="w-[29px]">5</span>
          <span className="w-[70px]">Time:</span>
          <span>20</span>
        </div>
        <div className="mt-[23px] flex justify-center">
          <span className="w-[63px]">Pplt:</span>
          <span className="w-[50px]">100</span>
          <span className="w-[110px] whitespace-nowrap tracking-[0.15px]">No. TrEps:</span>
          <span className="w-[29px]">3</span>
          <span className="w-[112px] whitespace-nowrap tracking-[0.2px]">No. TeEps:</span>
          <span>2</span>
        </div>
        <div className="mt-[38px] grid w-[416px] grid-cols-2 place-items-center pt-px">
          <Icon box={[352, 446]} id="gCrane" from="#ff4a1c" to="#f7b733" dir="h" width={5.5}>
            <path d="M370 470L385 453H501V493H452L470 470ZM385 453L392 470L400 455L410 470L418 455L428 470L436 455L446 470L454 455L464 470M470 454V470M482 455V482H455M488 470V484H478" />
            <path d="M400 470V480H418V470M409 480V492L382 508M409 492L436 508M372 508H447V520H372ZM463 494V596H490V494M463 498L490 522L463 546L490 570L463 594M490 498L463 522L490 546L463 570L490 594" />
            <path d="M360 541V596H443V527M360 560H394M394 596V535H443M419 527V535M360 548H386M366 541V555M378 543V558M370 569H385V580H370ZM403 545H434V570H403ZM412 584H422M426 584H434V576" />
          </Icon>
          <Icon box={[979, 446]} id="gCloud" from="#f0404a" to="#f0b040" dir="h" width={8} opacity={0.55}>
            <path strokeLinecap="round" strokeLinejoin="round" d="M1040 556H1014C992 556 984 541 984 526C984 510 996 497 1015 497C1017 472 1036 457 1057 457C1080 457 1098 473 1100 497C1119 497 1131 510 1131 526C1131 543 1119 556 1101 556H1076M1057 590V516M1035 539L1057 516L1080 539" />
          </Icon>
        </div>
      </section>

      <div className="mt-[46px] grid w-[468px] shrink-0 grid-cols-3 place-items-center">
        <Icon box={[199, 112]} id="gPower" from="#2cf598" to="#009efd" width={12}>
          <path d="M260 129A67.500 67.500 0 1 0 295 129" />
          <path d="M270.500 114H284.500V198H270.500Z" fill="url(#gPower)" stroke="none" />
        </Icon>
        <Icon box={[667, 112]} id="gReset" from="#2cf598" to="#009efd" width={12}>
          <path d="M687 195V203A59 59 0 1 0 746 143H724M747 119L722 143L747 169" />
        </Icon>
        <Icon box={[1135, 112]} id="gExpand" from="#2cf598" to="#009efd" width={12}>
          <path d="M1245 120H1284V159M1284 120L1227 178M1143 223V261H1182M1143 261L1201 203M1191 168L1236 212" />
        </Icon>
      </div>

      <div className="mt-[54px] flex h-[38px] shrink-0 items-center text-[17px] font-bold text-[#f4f4f4]">
        <span className="pt-0.5">Evolution Step</span>
        <div className="ml-[9px] flex h-[38px] w-[80px] items-center justify-center rounded-[19px] bg-[#656567] text-[16px] text-[#e8e8e8]">1</div>
      </div>
      <div className="mt-[42px] flex h-5 shrink-0 items-center text-[17px] font-bold text-[#f4f4f4]">
        <span className="tracking-[0.1px]">Generation No.</span>
        <span className="ml-[8px] tracking-[0.3px]">3803</span>
      </div>
      <div className="mt-[45px] flex h-5 shrink-0 items-center text-[17px] font-bold text-[#f4f4f4]">
        <span>Latest Score</span>
        <span className="ml-[13px] tracking-[0.3px]">682.0</span>
      </div>

      <div className="mt-[23px] grid h-[496px] w-[416px] shrink-0 grid-cols-2 grid-rows-4 place-items-center">
        <Icon box={[115, 82]} id="gGrowth" from="#00f2ee" to="#0061ff">
          <path d="M119 176H147V236H119ZM159 174L187 166V236H159ZM199 160L228 145V236H199ZM240 134L268 108V236H240ZM117 160C175 163 215 150 262 94" />
          <path d="M268 86L250 93L266 102Z" fill="#00e6ee" />
        </Icon>
        <Icon box={[739, 82]} id="gEye" from="#00ffc8" to="#00a0ff" width={8}>
          <path strokeLinejoin="round" d="M750 160C790 104 844 104 885 160C844 216 790 216 750 160Z" />
          <circle cx="817" cy="160" r="24.500" />
        </Icon>
        <Icon box={[115, 454]} id="gLaptop" from="#00ecb4" to="#00a6f6">
          <path d="M126 566V484Q126 474 136 474H252Q262 474 262 484V566M119 567H177Q180 575 190 575H200Q208 575 211 567H268V577Q268 591 254 591H133Q119 591 119 577ZM135 485H252V559H135Z" />
          <path d="M193 492L219 505V538L193 551L168 538V505ZM168 505L193 516L219 505M193 516V551M168 509C144 513 144 529 168 535M219 509C243 513 243 529 205 536M182 526V541M175 534L190 541V530" />
        </Icon>
        <Icon box={[739, 454]} id="gPeople" from="#3cf07a" to="#0e9ce8" dir="h" width={4.5}>
          <circle cx="817" cy="527" r="14" />
          <path d="M800 575V561Q802 542 817 542Q833 542 835 561V575ZM793 562H782V548Q782 532 796 529M842 562H852V548Q852 532 839 529M778 551H765V533Q766 521 776 519M857 551H870V533Q869 521 859 519M784 522C778 505 795 496 808 505M850 522C856 505 839 496 826 505M775 517C761 502 774 486 793 496M860 517C873 502 861 486 842 496" />
        </Icon>
        <Icon box={[115, 77]} id="gWheat" from="#0ff0a8" to="#0aa4f4" width={4.5}>
          <path d={`M193 227V118M193 118C176 106 182 94 193 85C205 94 211 106 193 118${leafPair(119)}${leafPair(154)}${leafPair(189)}`} />
        </Icon>
        <Icon box={[739, 77]} id="gBars" from="#00f2de" to="#0061ff" width={5}>
          <BarsShape />
        </Icon>
        <Icon box={[115, 449]} id="gDown" from="#00f2e8" to="#0a6cff" width={4.5}>
          <path strokeLinejoin="round" d="M162 567H139Q135 567 135 563V461Q135 457 139 457H248Q252 457 252 461V563Q252 567 248 567H225M179 457V510L193 501L208 510V457M181 529H206V569H217L193 597L170 569H181Z" />
        </Icon>
        <Icon box={[739, 449]} id="gUp" from="#00f2e8" to="#0a6cff" width={4.5}>
          <path strokeLinejoin="round" d="M797 567H763Q759 567 759 563V461Q759 457 763 457H872Q876 457 876 461V563Q876 567 872 567H838M803 457V510L817 501L832 510V457M805 597H830V558H841L817 529L794 558H805Z" />
        </Icon>
      </div>
    </aside>
  );
}

export default function App() {
  return (
    <div className="flex h-[1080px] w-[1920px] overflow-hidden bg-[#2c2c2e] p-1 font-['Noto_Sans','Open_Sans',sans-serif]">
      <main className="relative h-[1072px] w-[1416px] rounded-lg bg-gradient-to-br from-[#202022] to-[#1b1b1c]">
        <Network />
        <div className="pointer-events-none absolute inset-0 rounded-lg shadow-[inset_0_0_26px_5px_#4b4b4d]" />
        <GrapherWindow />
      </main>
      <Sidebar />
    </div>
  );
}
